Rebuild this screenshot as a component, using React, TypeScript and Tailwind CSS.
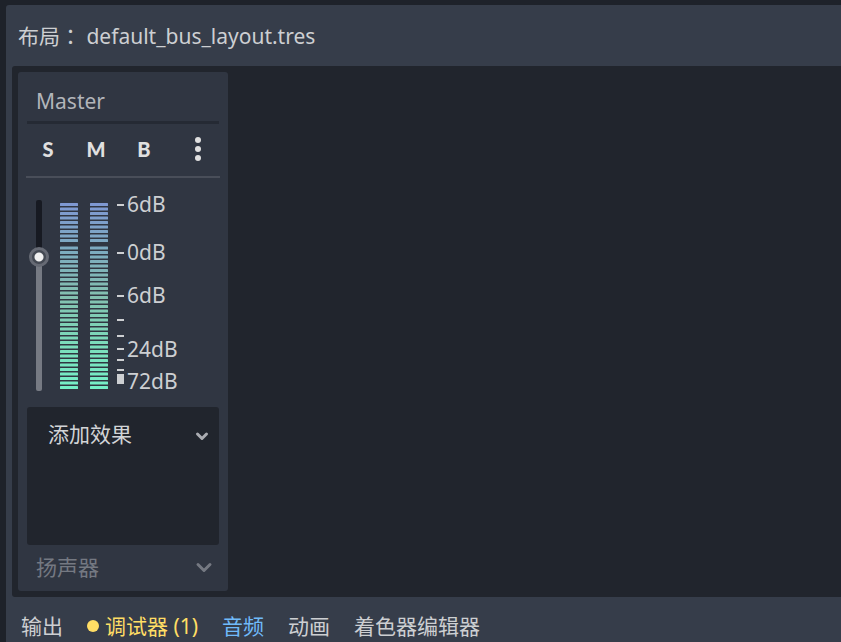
import { useState, type ReactNode } from "react";

const SEGMENT_PITCH = 4.5;

const segments = [
  ...Array.from({ length: 9 }, (_, i) => i * SEGMENT_PITCH),
  ...Array.from({ length: 32 }, (_, i) => 43.5 + i * SEGMENT_PITCH),
];

function Meter({ id }: { id: string }) {
  return (
    <svg width="18" height="187" viewBox="0 0 18 187" role="img" aria-label={`Level ${id}`}>
      <defs>
        <linearGradient id={id} x1="0" y1="0" x2="0" y2="187" gradientUnits="userSpaceOnUse">
          <stop offset="0" stopColor="#7f98d2" />
          <stop offset="0.25" stopColor="#7dabc0" />
          <stop offset="0.5" stopColor="#83c0b0" />
          <stop offset="0.75" stopColor="#7cdcbb" />
          <stop offset="1" stopColor="#74f0c8" />
        </linearGradient>
      </defs>
      {segments.map((y) => (
        <rect key={y} x="0" y={y} width="18" height="3" rx="0.5" fill={`url(#${id})`} />
      ))}
    </svg>
  );
}

function ScaleTicks() {
  return (
    <svg width="7" height="187" viewBox="0 0 7 187" fill="#cdcfd2" aria-hidden="true">
      {[1, 49, 92, 116, 132, 145, 156, 166].map((y) => (
        <rect key={y} x="0" y={y} width="7" height="2" />
      ))}
      <rect x="0" y="171" width="7" height="10" />
    </svg>
  );
}

function Chevron({ className, path }: { className: string; path: string }) {
  return (
    <svg
      className={`pointer-events-none shrink-0 ${className}`}
      width="18"
      height="18"
      viewBox="0 0 18 18"
      fill="none"
      stroke="currentColor"
      strokeWidth="3"
      strokeLinecap="round"
      strokeLinejoin="round"
      aria-hidden="true"
    >
      <path d={path} />
    </svg>
  );
}

function BusToggle({ label, children }: { label: string; children: ReactNode }) {
  return (
    <button
      type="button"
      aria-label={label}
      className="h-8 w-12 text-center font-[Lato,sans-serif] text-xl leading-8 font-black text-[#e0e0e0]"
    >
      {children}
    </button>
  );
}

function BusStrip() {
  const [volume, setVolume] = useState(124);
  const [name, setName] = useState("Master");

  return (
    <section className="flex w-[210px] flex-col rounded-[3px] bg-[#303642] px-[9px] pb-[5px]">
      <input
        aria-label="Bus name"
        value={name}
        onChange={(e) => setName(e.target.value)}
        className="mt-2 h-11 border-b-3 border-[#252a34] bg-transparent px-[9px] text-[#b2b5ba] outline-none"
      />
      <div className="-mx-px mt-2 flex h-[46px] items-start border-b-2 border-[#494e59] pt-px">
        <div className="-ml-0.5 flex">
          <BusToggle label="Solo">S</BusToggle>
          <BusToggle label="Mute">M</BusToggle>
          <BusToggle label="Bypass">B</BusToggle>
        </div>
        <button type="button" aria-label="Bus options" className="mr-3 ml-auto flex h-8 w-5 items-center justify-center">
          <svg width="6" height="24" viewBox="0 0 6 24" fill="#e0e0e0" aria-hidden="true">
            <circle cx="3" cy="3" r="3" />
            <circle cx="3" cy="12" r="3" />
            <circle cx="3" cy="21" r="3" />
          </svg>
        </button>
      </div>
      <div className="mt-[22px] flex h-[191px] pl-0.5">
        <input
          type="range"
          aria-label="Volume"
          min={0}
          max={171}
          value={volume}
          onChange={(e) => setVolume(Number(e.target.value))}
          className="h-full w-5 appearance-none bg-transparent [direction:rtl] [writing-mode:vertical-lr] [&::-webkit-slider-runnable-track]:h-full [&::-webkit-slider-runnable-track]:w-1.5 [&::-webkit-slider-runnable-track]:rounded-[2px] [&::-webkit-slider-runnable-track]:bg-[linear-gradient(to_bottom,#171a22_30%,#767a83_30%)] [&::-webkit-slider-thumb]:-ml-[7px] [&::-webkit-slider-thumb]:size-5 [&::-webkit-slider-thumb]:appearance-none [&::-webkit-slider-thumb]:rounded-full [&::-webkit-slider-thumb]:border-3 [&::-webkit-slider-thumb]:border-[#666a74] [&::-webkit-slider-thumb]:bg-[radial-gradient(circle,#f0f0f0_4px,#444953_5px)]"
        />
        <div className="ml-[11px] flex gap-3 pt-[3px]">
          <Meter id="left" />
          <Meter id="right" />
        </div>
        <div className="ml-[9px] pt-[3px]">
          <ScaleTicks />
        </div>
        <div className="-mt-2.5 ml-[3px] flex flex-col leading-7 text-[#cdcfd2]">
          <span className="h-12 shrink-0">6dB</span>
          <span className="h-[43px] shrink-0">0dB</span>
          <span className="h-[54px] shrink-0">6dB</span>
          <span className="h-8 shrink-0">24dB</span>
          <span>72dB</span>
        </div>
      </div>
      <div className="mt-4 h-[138px] rounded-[3px] bg-[#21252d] pt-2">
        <div className="flex items-center pr-2">
          <select
            aria-label="Add effect"
            className="-mr-4 h-10 w-full appearance-none bg-transparent pr-5 pl-[21px] text-[#d2d4d7] outline-none"
          >
            <option>添加效果</option>
          </select>
          <Chevron path="M4.500 7 9 11.500 13.500 7" className="mt-0.5 text-[#aaacb1]" />
        </div>
      </div>
      <div className="mt-[5px] flex items-center pr-1">
        <select
          aria-label="Send to"
          disabled
          className="-mr-5 h-9 w-full appearance-none bg-transparent pr-6 pl-[9px] text-[#757982] opacity-100 outline-none"
        >
          <option>扬声器</option>
        </select>
        <Chevron path="M3 5.500 9 11.500 15 5.500" className="text-[#757982]" />
      </div>
    </section>
  );
}

export default function App() {
  return (
    <div className="min-h-screen bg-[#1e222a] pt-[5px] pl-1.5 font-['Noto_Sans','Noto_Sans_CJK_SC',sans-serif] text-[21px] text-[#cdcfd2]">
      <div className="flex min-h-[637px] flex-col rounded-tl-[3px] bg-[#363d4a]">
        <header className="h-[61px] pt-[15px] pl-3 leading-[30px]">
          布局<span className="font-['Noto_Sans_CJK_TC',sans-serif]">：</span> default_bus_layout.tres
        </header>
        <main className="ml-1.5 flex rounded-l-[3px] bg-[#21252d] p-1.5">
          <BusStrip />
        </main>
        <nav className="flex items-center gap-6 pt-3.5 pl-[15px] leading-[30px] whitespace-nowrap">
          <button type="button">输出</button>
          <button type="button" className="flex items-center gap-1.5 text-[#ffdd65]">
            <span className="size-3 rounded-full bg-[#ffdd65]" />
            调试器 (1)
          </button>
          <button type="button" className="text-[#70bafa]">
            音频
          </button>
          <button type="button">动画</button>
          <button type="button">着色器编辑器</button>
        </nav>
      </div>
    </div>
  );
}
